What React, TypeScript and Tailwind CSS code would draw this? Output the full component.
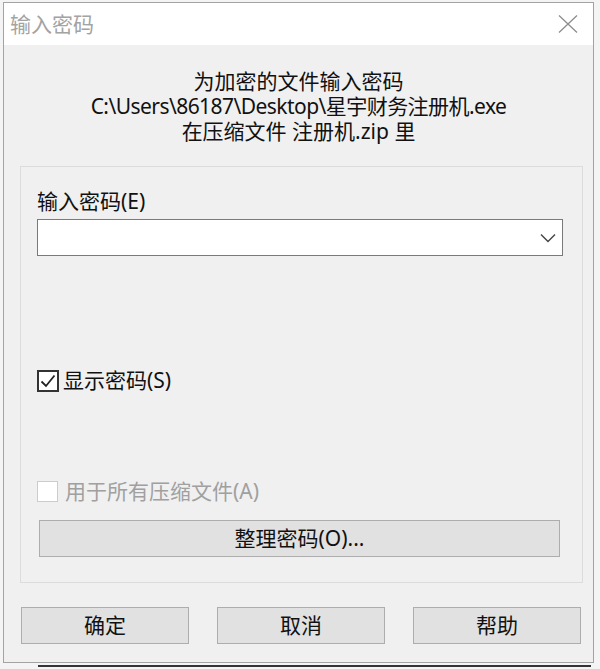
const font = "font-['Noto_Sans','Noto_Sans_CJK_SC',sans-serif]";

const App = () => {
  return (
    <div className={`h-[669px] w-[600px] overflow-hidden bg-[#f4f4f4] pl-[3px] pt-[2px] ${font}`}>
      <div className="flex h-[661px] w-[591px] flex-col border border-[#a3a3a3] bg-[#f0f0f0]">
        {/* title bar */}
        <div className="flex h-[42px] shrink-0 items-center justify-between bg-white pl-[6px] pr-[15px]">
          <span className="text-[21px] leading-none text-[#a3a3a3]">输入密码</span>
          <svg width="20" height="18" viewBox="0 0 20 18" className="text-[#8a8a8a]">
            <path d="M1 0.5 L19 17.5 M19 0.5 L1 17.5" stroke="currentColor" strokeWidth="1.2" fill="none" />
          </svg>
        </div>

        {/* heading */}
        <div className="flex flex-col items-center pt-[24px] text-[21px] leading-[25px] text-[#111]">
          <p className="h-[25px]">为加密的文件输入密码</p>
          <p className="h-[25px] tracking-[-0.55px]">C:\Users\86187\Desktop\星宇财务注册机.exe</p>
          <p className="h-[25px]">在压缩文件 注册机.zip 里</p>
        </div>

        {/* group box */}
        <div className="ml-[16px] mr-[10px] mt-[22px] border border-[#dcdcdc] pb-[25px] pl-[16px] pr-[19px] pt-[22px]">
          <p className="text-[21px] leading-[25px] text-[#111]">输入密码(E)</p>
          <div className="mt-[5px] flex h-[37px] items-center justify-end border border-[#7a7a7a] bg-white pr-[6px]">
            <svg width="16" height="10" viewBox="0 0 16 10" className="text-[#444]">
              <path d="M1 1.5 L8 8.5 L15 1.5" stroke="currentColor" strokeWidth="1.4" fill="none" />
            </svg>
          </div>

          <div className="mt-[112px] flex h-[25px] items-center gap-[4px]">
            <span className="flex h-[22px] w-[22px] items-center justify-center border-2 border-[#333] bg-white">
              <svg width="16" height="14" viewBox="0 0 16 14" className="text-[#222]">
                <path d="M1.5 7.5 L6 12 L14.5 1.5" stroke="currentColor" strokeWidth="1.8" fill="none" />
              </svg>
            </span>
            <span className="text-[21px] leading-[25px] text-[#111]">显示密码(S)</span>
          </div>

          <div className="mt-[86px] flex h-[25px] items-center gap-[7px]">
            <span className="h-[21px] w-[21px] border border-[#cccccc] bg-white"></span>
            <span className="text-[21px] leading-[25px] text-[#a0a0a0]">用于所有压缩文件(A)</span>
          </div>

          <button className="ml-[2px] mr-[-2px] mt-[16px] flex h-[37px] w-[521px] items-center justify-center border border-[#adadad] bg-[#e1e1e1] text-[21px] text-[#111]">
            整理密码(O)...
          </button>
        </div>

        {/* dialog buttons */}
        <div className="ml-[17px] mr-[12px] mt-[24px] grid grid-cols-3 gap-[28px]">
          {["确定", "取消", "帮助"].map((label) => (
            <button
              key={label}
              className="flex h-[37px] items-center justify-center border border-[#adadad] bg-[#e1e1e1] text-[21px] text-[#111]"
            >
              {label}
            </button>
          ))}
        </div>
      </div>
      <div className="ml-[35px] mt-[2px] h-[2px] w-[553px] bg-[#333]"></div>
    </div>
  );
};

export default App;
